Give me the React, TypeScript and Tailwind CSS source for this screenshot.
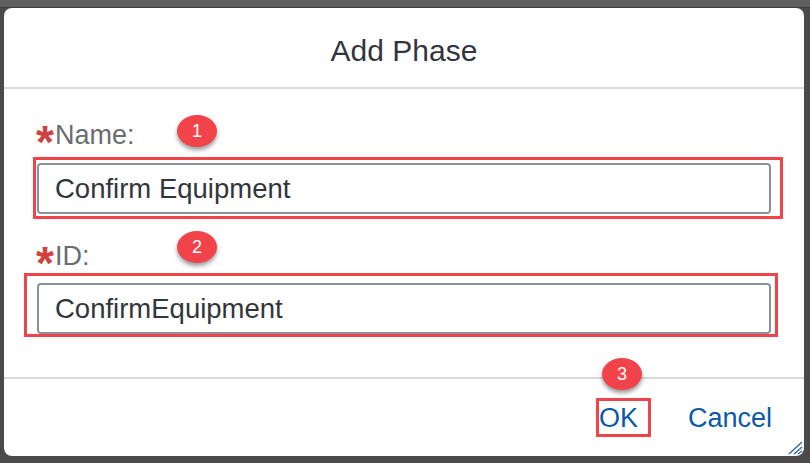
const font = { fontFamily: '"Liberation Sans", Arial, sans-serif' };

function Badge({ n, className }: { n: number; className: string }) {
	return (
		<div
			className={
				"absolute w-[40px] h-[32px] rounded-[50%] bg-[#f2434a] text-white text-[18px] leading-[32px] text-center shadow-[0_3px_4px_rgba(0,0,0,0.4)] " +
				className
			}
		>
			{n}
		</div>
	);
}

function Label({ text }: { text: string }) {
	return (
		<div className="flex h-[32px] leading-[32px] text-[27px] text-[#6a6d70] whitespace-nowrap">
			<span className="relative top-[7px] w-[19px] -ml-[1px] font-bold text-[#d0413f] text-[46px] leading-[32px]">
				*
			</span>
			<span>{text}</span>
		</div>
	);
}

function Field({ value }: { value: string }) {
	return (
		<div className="h-[51px] border-2 border-[#89919a] rounded-[4px] px-[16px] text-[27.5px] leading-[47px] text-[#32363a]">
			{value}
		</div>
	);
}

export default function App() {
	return (
		<div
			className="w-[810px] h-[463px] bg-[#4a4a4a] flex flex-col overflow-hidden"
			style={font}
		>
			<div className="h-[7px] shrink-0 bg-[#5f5f5f]" />
			<div className="h-[1px] shrink-0 bg-[#3e3e3e]" />
			<div className="flex-1 flex pl-[4px] pr-[6px] pb-[7px]">
				<div className="relative flex-1 flex flex-col bg-white rounded-[8px]">
					<div className="h-[81px] shrink-0 border-b-2 border-[#d9d9d9] pt-[25px] text-center text-[30px] leading-[36px] text-[#32363a]">
						Add Phase
					</div>

					<div className="px-[33px] pb-[43px] border-b-2 border-[#d9d9d9]">
						<div className="mt-[30px]">
							<Label text="Name:" />
						</div>
						<div className="mt-[12px]">
							<Field value="Confirm Equipment" />
						</div>
						<div className="mt-[26px]">
							<Label text="ID:" />
						</div>
						<div className="mt-[11px]">
							<Field value="ConfirmEquipment" />
						</div>
					</div>

					<div className="flex-1 flex items-center justify-end gap-[50px] pr-[32px] text-[27px] leading-[32px] text-[#0b5aa8]">
						<span>OK</span>
						<span>Cancel</span>
					</div>

					{/* annotation boxes */}
					<div className="absolute left-[29px] top-[149px] w-[750px] h-[62px] border-[3px] border-[#f0434a]" />
					<div className="absolute left-[20px] top-[265px] w-[754px] h-[64px] border-[3px] border-[#f0434a]" />
					<div className="absolute left-[592px] top-[390px] w-[55px] h-[39px] border-[3px] border-[#f0434a]" />

					<Badge n={1} className="left-[173px] top-[107px]" />
					<Badge n={2} className="left-[173px] top-[223px]" />
					<Badge n={3} className="left-[598px] top-[350px]" />

					<svg
						className="absolute right-[1px] bottom-[1px]"
						width="15"
						height="14"
						viewBox="0 0 15 14"
					>
						<path
							d="M1 13 L14 1 M6 13 L14 6 M10 13 L14 10"
							stroke="#3a6aa8"
							strokeWidth="1.5"
							fill="none"
						/>
					</svg>
				</div>
			</div>
		</div>
	);
}
